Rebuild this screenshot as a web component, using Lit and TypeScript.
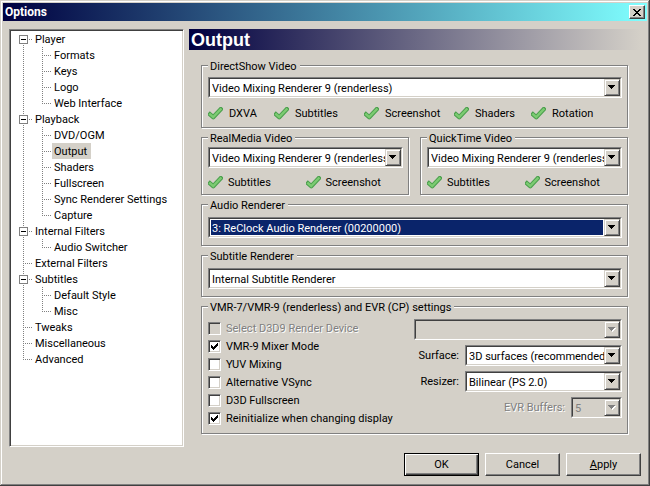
import { LitElement, html, css, svg, nothing } from "lit";
import { customElement, property, state } from "lit/decorators.js";
import { classMap } from "lit/directives/class-map.js";

interface Page {
  name: string;
  children?: string[];
}

const PAGES: Page[] = [
  { name: "Player", children: ["Formats", "Keys", "Logo", "Web Interface"] },
  {
    name: "Playback",
    children: ["DVD/OGM", "Output", "Shaders", "Fullscreen", "Sync Renderer Settings", "Capture"],
  },
  { name: "Internal Filters", children: ["Audio Switcher"] },
  { name: "External Filters" },
  { name: "Subtitles", children: ["Default Style", "Misc"] },
  { name: "Tweaks" },
  { name: "Miscellaneous" },
  { name: "Advanced" },
];

const palette = css`
  :host {
    --face: #d4d0c8;
    --light: #ffffff;
    --shadow: #808080;
    --dark: #404040;
    --select: #0a246a;
  }
  * {
    box-sizing: border-box;
  }
`;

/* Drop-down list with the classic sunken frame and raised arrow button. */
@customElement("combo-box")
export class ComboBox extends LitElement {
  @property() label = "";
  @property() value = "";
  @property({ type: Boolean }) disabled = false;
  @property({ type: Boolean }) active = false;
  @property({ type: Boolean }) captioned = false;

  static styles = [
    palette,
    css`
      :host {
        display: flex;
        align-items: center;
        justify-content: flex-end;
        gap: 6px;
        min-width: 0;
      }
      .frame {
        position: relative;
        display: flex;
        flex: 1;
        min-width: 0;
        height: 21px;
        border: 1px solid;
        border-color: var(--shadow) var(--light) var(--light) var(--shadow);
      }
      .captioned {
        flex: none;
        width: var(--combo-width, 157px);
      }
      select {
        appearance: none;
        flex: 1;
        min-width: 0;
        margin: 0;
        padding: 2px 16px 0 2px;
        border: 1px solid;
        border-color: var(--dark) var(--face) var(--face) var(--dark);
        border-radius: 0;
        outline: none;
        background: #fff;
        color: #000;
        font: inherit;
      }
      select:disabled {
        background: var(--face);
        color: var(--shadow);
        opacity: 1;
      }
      .active select {
        background: var(--select);
        color: #fff;
        box-shadow: inset 0 0 0 1px #fff;
      }
      .arrow {
        position: absolute;
        inset: 1px 1px 1px auto;
        width: 16px;
        display: grid;
        place-items: center;
        border: 1px solid;
        border-color: var(--face) var(--dark) var(--dark) var(--face);
        background: var(--face);
        box-shadow: inset 1px 1px var(--light), inset -1px -1px var(--shadow);
        pointer-events: none;
      }
      .active .arrow {
        outline: 1px solid #fff;
        outline-offset: 0;
        clip-path: inset(0 0 0 -1px);
      }
      .off {
        color: var(--shadow);
        text-shadow: 1px 1px var(--light);
      }
    `,
  ];

  render() {
    const ink = this.disabled ? "#808080" : "#000";
    return html`
      ${this.captioned
        ? html`<label for="list" class=${this.disabled ? "off" : ""}>${this.label}</label>`
        : nothing}
      <div class=${classMap({ frame: true, captioned: this.captioned, active: this.active })}>
        <select id="list" aria-label=${this.label} ?disabled=${this.disabled}>
          <option>${this.value}</option>
        </select>
        <span class="arrow">
          <svg width="8" height="5" viewBox="0 0 8 5" shape-rendering="crispEdges" aria-hidden="true">
            ${this.disabled ? svg`<path fill="#fff" d="M1 1h7v1H7v1H6v1H5v1H4V4H3V3H2V2H1z" />` : nothing}
            <path fill=${ink} d="M0 0h7v1H6v1H5v1H4v1H3V3H2V2H1V1H0z" />
          </svg>
        </span>
      </div>
    `;
  }
}

@customElement("app-root")
export class AppRoot extends LitElement {
  @state() private current = "Output";
  @state() private closed = new Set<string>();

  static styles = [
    palette,
    css`
      :host {
        display: block;
        font: 11px/13px Roboto, "Liberation Sans", sans-serif;
        color: #000;
      }
      .window {
        display: flex;
        flex-direction: column;
        min-height: 100vh;
        padding: 3px 3px 10px;
        background: var(--face);
        box-shadow: inset -1px -1px var(--dark), inset 1px 1px var(--face),
          inset -2px -2px var(--shadow), inset 2px 2px var(--light);
      }
      .titlebar {
        display: flex;
        align-items: center;
        justify-content: space-between;
        height: 18px;
        padding: 0 2px;
        background: linear-gradient(to right, #000040, #80ffff);
        color: #fff;
      }
      .titlebar h1 {
        margin: 0;
        font: bold 12px/16px Roboto, sans-serif;
      }
      button {
        margin: 0;
        padding: 0;
        border: 1px solid;
        border-color: var(--light) var(--dark) var(--dark) var(--light);
        background: var(--face);
        box-shadow: inset -1px -1px var(--shadow);
        color: #000;
        font: inherit;
      }
      .close {
        display: grid;
        place-items: center;
        width: 16px;
        height: 14px;
      }
      .body {
        display: grid;
        grid-template-columns: 175px minmax(0, 1fr);
        gap: 5px;
        flex: 1;
        padding: 8px 6px 0;
      }

      /* page tree */
      .tree {
        border: 1px solid;
        border-color: var(--shadow) var(--light) var(--light) var(--shadow);
        background: #fff;
        box-shadow: inset 1px 1px var(--dark), inset -1px -1px var(--face);
        padding: 1px;
      }
      ul {
        margin: 0;
        padding: 0;
        list-style: none;
      }
      ul ul {
        padding-left: 19px;
      }
      li {
        --from: 0px;
        --dots: repeating-linear-gradient(to bottom, #808080 0 1px, transparent 1px 2px);
        background: var(--dots) 12px var(--from) / 1px 100% no-repeat;
      }
      li:last-child {
        background-size: 1px 9px;
      }
      .tree > ul > li:first-child {
        --from: 8px;
      }
      .row {
        display: flex;
        align-items: center;
        height: 16px;
        padding-left: 8px;
        background: repeating-linear-gradient(to right, #808080 0 1px, transparent 1px 2px) 12px 8px /
          9px 1px no-repeat;
      }
      .twist {
        display: grid;
        place-items: center;
        width: 9px;
        height: 9px;
        margin-right: 5px;
        border: 1px solid var(--shadow);
        background: #fff;
        box-shadow: none;
      }
      .leaf {
        width: 14px;
      }
      .row a {
        padding: 2px 4px 0 2px;
        line-height: 14px;
        white-space: nowrap;
        color: #000;
        text-decoration: none;
      }
      .row .current {
        background: var(--face);
      }

      /* settings page */
      .banner {
        height: 21px;
        margin: 0;
        padding-left: 2px;
        background: linear-gradient(to right, #000040, var(--face));
        color: #fff;
        font: bold 18px/22px "Liberation Sans", sans-serif;
      }
      .groups {
        display: flex;
        flex-direction: column;
        gap: 2px;
        padding: 8px 13px 0 12px;
      }
      .pair {
        display: grid;
        grid-template-columns: 1fr 1fr;
        gap: 11px;
      }
      fieldset {
        min-width: 0;
        margin: 0;
        padding: 4px 5px 6px 6px;
        border: 1px solid var(--shadow);
        box-shadow: inset 1px 1px var(--light), 1px 1px var(--light);
      }
      .pair fieldset {
        padding-top: 2px;
        padding-bottom: 4px;
      }
      fieldset.single {
        padding-top: 5px;
        padding-bottom: 7px;
      }
      legend {
        height: 15px;
        padding: 3px 3px 0 2px;
        background: var(--face);
        line-height: 12px;
      }
      .features {
        display: grid;
        grid-template-columns: 1fr 1fr;
        margin-top: 6px;
      }
      .five {
        grid-template-columns: 66fr 90fr 90fr 77fr 91fr;
        margin-top: 7px;
      }
      .feature {
        display: flex;
        align-items: center;
        gap: 5px;
        height: 16px;
      }
      .five .feature {
        gap: 6px;
      }
      .vmr {
        display: grid;
        grid-template-columns: minmax(0, 1fr) 208px;
      }
      .checks {
        display: flex;
        flex-direction: column;
        gap: 5px;
        padding-top: 3px;
      }
      .checks label {
        display: flex;
        align-items: center;
        gap: 5px;
        height: 13px;
      }
      .checks .off {
        color: var(--shadow);
        text-shadow: 1px 1px var(--light);
      }
      input {
        appearance: none;
        width: 13px;
        height: 13px;
        margin: 0;
        border: 1px solid;
        border-color: var(--shadow) var(--light) var(--light) var(--shadow);
        background: #fff;
        box-shadow: inset 1px 1px var(--dark), inset -1px -1px var(--face);
      }
      input:disabled {
        background: var(--face);
      }
      .box {
        display: grid;
        place-items: center;
      }
      .box > * {
        grid-area: 1 / 1;
      }
      .box svg {
        visibility: hidden;
        pointer-events: none;
      }
      .box input:checked + svg {
        visibility: visible;
      }
      .lists {
        display: flex;
        flex-direction: column;
        gap: 5px;
        padding-bottom: 8px;
      }
      .narrow {
        --combo-width: 51px;
      }
      .actions {
        display: flex;
        justify-content: flex-end;
        gap: 6px;
        padding: 6px 6px 0;
      }
      .actions button {
        width: 75px;
        height: 23px;
      }
      .actions .default {
        border-color: #000;
        box-shadow: inset 1px 1px var(--light), inset -1px -1px var(--dark),
          inset -2px -2px var(--shadow);
      }
    `,
  ];

  private toggle(name: string) {
    const next = new Set(this.closed);
    if (!next.delete(name)) next.add(name);
    this.closed = next;
  }

  private link(name: string) {
    return html`<a
      href="#"
      class=${classMap({ current: name === this.current })}
      @click=${(e: Event) => {
        e.preventDefault();
        this.current = name;
      }}
      >${name}</a
    >`;
  }

  private node(page: Page) {
    const open = !this.closed.has(page.name);
    return html`<li>
      <div class="row">
        ${page.children
          ? html`<button
              class="twist"
              aria-label=${page.name}
              aria-expanded=${open}
              @click=${() => this.toggle(page.name)}
            >
              <svg width="5" height="5" shape-rendering="crispEdges" aria-hidden="true">
                <path d=${open ? "M0 2h5v1H0z" : "M0 2h2V0h1v2h2v1H3v2H2V3H0z"} />
              </svg>
            </button>`
          : html`<span class="leaf"></span>`}
        ${this.link(page.name)}
      </div>
      ${page.children && open
        ? html`<ul>
            ${page.children.map(
              (c) => html`<li>
                <div class="row"><span class="leaf"></span>${this.link(c)}</div>
              </li>`
            )}
          </ul>`
        : nothing}
    </li>`;
  }

  private features(names: string[]) {
    return html`<div class=${classMap({ features: true, five: names.length === 5 })}>
      ${names.map(
        (n) => html`<span class="feature">
          <svg width="15" height="13" viewBox="0 0 15 13" fill="none" aria-hidden="true">
            <path
              d="M2 7.4L5.2 10.2L12.8 2.2"
              stroke="#4a9e4c"
              stroke-width="4.4"
              stroke-linejoin="round"
              stroke-linecap="square"
            />
            <path
              d="M2.2 7.5L5.2 10.1L12.6 2.4"
              stroke="#7ccb72"
              stroke-width="2.4"
              stroke-linecap="square"
            />
          </svg>
          ${n}
        </span>`
      )}
    </div>`;
  }

  private check(name: string, checked: boolean, disabled = false) {
    return html`<label class=${disabled ? "off" : ""}>
      <span class="box">
        <input type="checkbox" .checked=${checked} ?disabled=${disabled} />
        <svg width="7" height="7" shape-rendering="crispEdges" aria-hidden="true">
          <path d="M0 2h1v1h1v1h1V3h1V2h1V1h1V0h1v3H6v1H5v1H4v1H3v1H2V6H1V5H0z" />
        </svg>
      </span>
      ${name}
    </label>`;
  }

  render() {
    const vmr9 = "Video Mixing Renderer 9 (renderless)";
    return html`
      <div class="window">
        <header class="titlebar">
          <h1>Options</h1>
          <button class="close" aria-label="Close">
            <svg width="8" height="7" shape-rendering="crispEdges" aria-hidden="true">
              <path
                d="M0 0h2v1h1v1h2V1h1V0h2v1H7v1H6v1H5v1h1v1h1v1h1v1H6V6H5V5H3v1H2v1H0V6h1V5h1V4h1V3H2V2H1V1H0z"
              />
            </svg>
          </button>
        </header>
        <div class="body">
          <nav class="tree">
            <ul>
              ${PAGES.map((p) => this.node(p))}
            </ul>
          </nav>
          <main>
            <h2 class="banner">Output</h2>
            <div class="groups">
              <fieldset>
                <legend>DirectShow Video</legend>
                <combo-box label="DirectShow Video" value=${vmr9}></combo-box>
                ${this.features(["DXVA", "Subtitles", "Screenshot", "Shaders", "Rotation"])}
              </fieldset>
              <div class="pair">
                ${["RealMedia Video", "QuickTime Video"].map(
                  (n) => html`<fieldset>
                    <legend>${n}</legend>
                    <combo-box label=${n} value=${vmr9}></combo-box>
                    ${this.features(["Subtitles", "Screenshot"])}
                  </fieldset>`
                )}
              </div>
              <fieldset class="single">
                <legend>Audio Renderer</legend>
                <combo-box
                  active
                  label="Audio Renderer"
                  value="3: ReClock Audio Renderer (00200000)"
                ></combo-box>
              </fieldset>
              <fieldset class="single">
                <legend>Subtitle Renderer</legend>
                <combo-box label="Subtitle Renderer" value="Internal Subtitle Renderer"></combo-box>
              </fieldset>
              <fieldset class="single">
                <legend>VMR-7/VMR-9 (renderless) and EVR (CP) settings</legend>
                <div class="vmr">
                  <div class="checks">
                    ${this.check("Select D3D9 Render Device", false, true)}
                    ${this.check("VMR-9 Mixer Mode", true)} ${this.check("YUV Mixing", false)}
                    ${this.check("Alternative VSync", false)} ${this.check("D3D Fullscreen", false)}
                    ${this.check("Reinitialize when changing display", true)}
                  </div>
                  <div class="lists">
                    <combo-box disabled label="D3D9 Render Device"></combo-box>
                    <combo-box captioned label="Surface:" value="3D surfaces (recommended)"></combo-box>
                    <combo-box captioned label="Resizer:" value="Bilinear (PS 2.0)"></combo-box>
                    <combo-box captioned disabled class="narrow" label="EVR Buffers:" value="5"></combo-box>
                  </div>
                </div>
              </fieldset>
            </div>
          </main>
        </div>
        <footer class="actions">
          <button class="default">OK</button>
          <button>Cancel</button>
          <button><u>A</u>pply</button>
        </footer>
      </div>
    `;
  }
}
